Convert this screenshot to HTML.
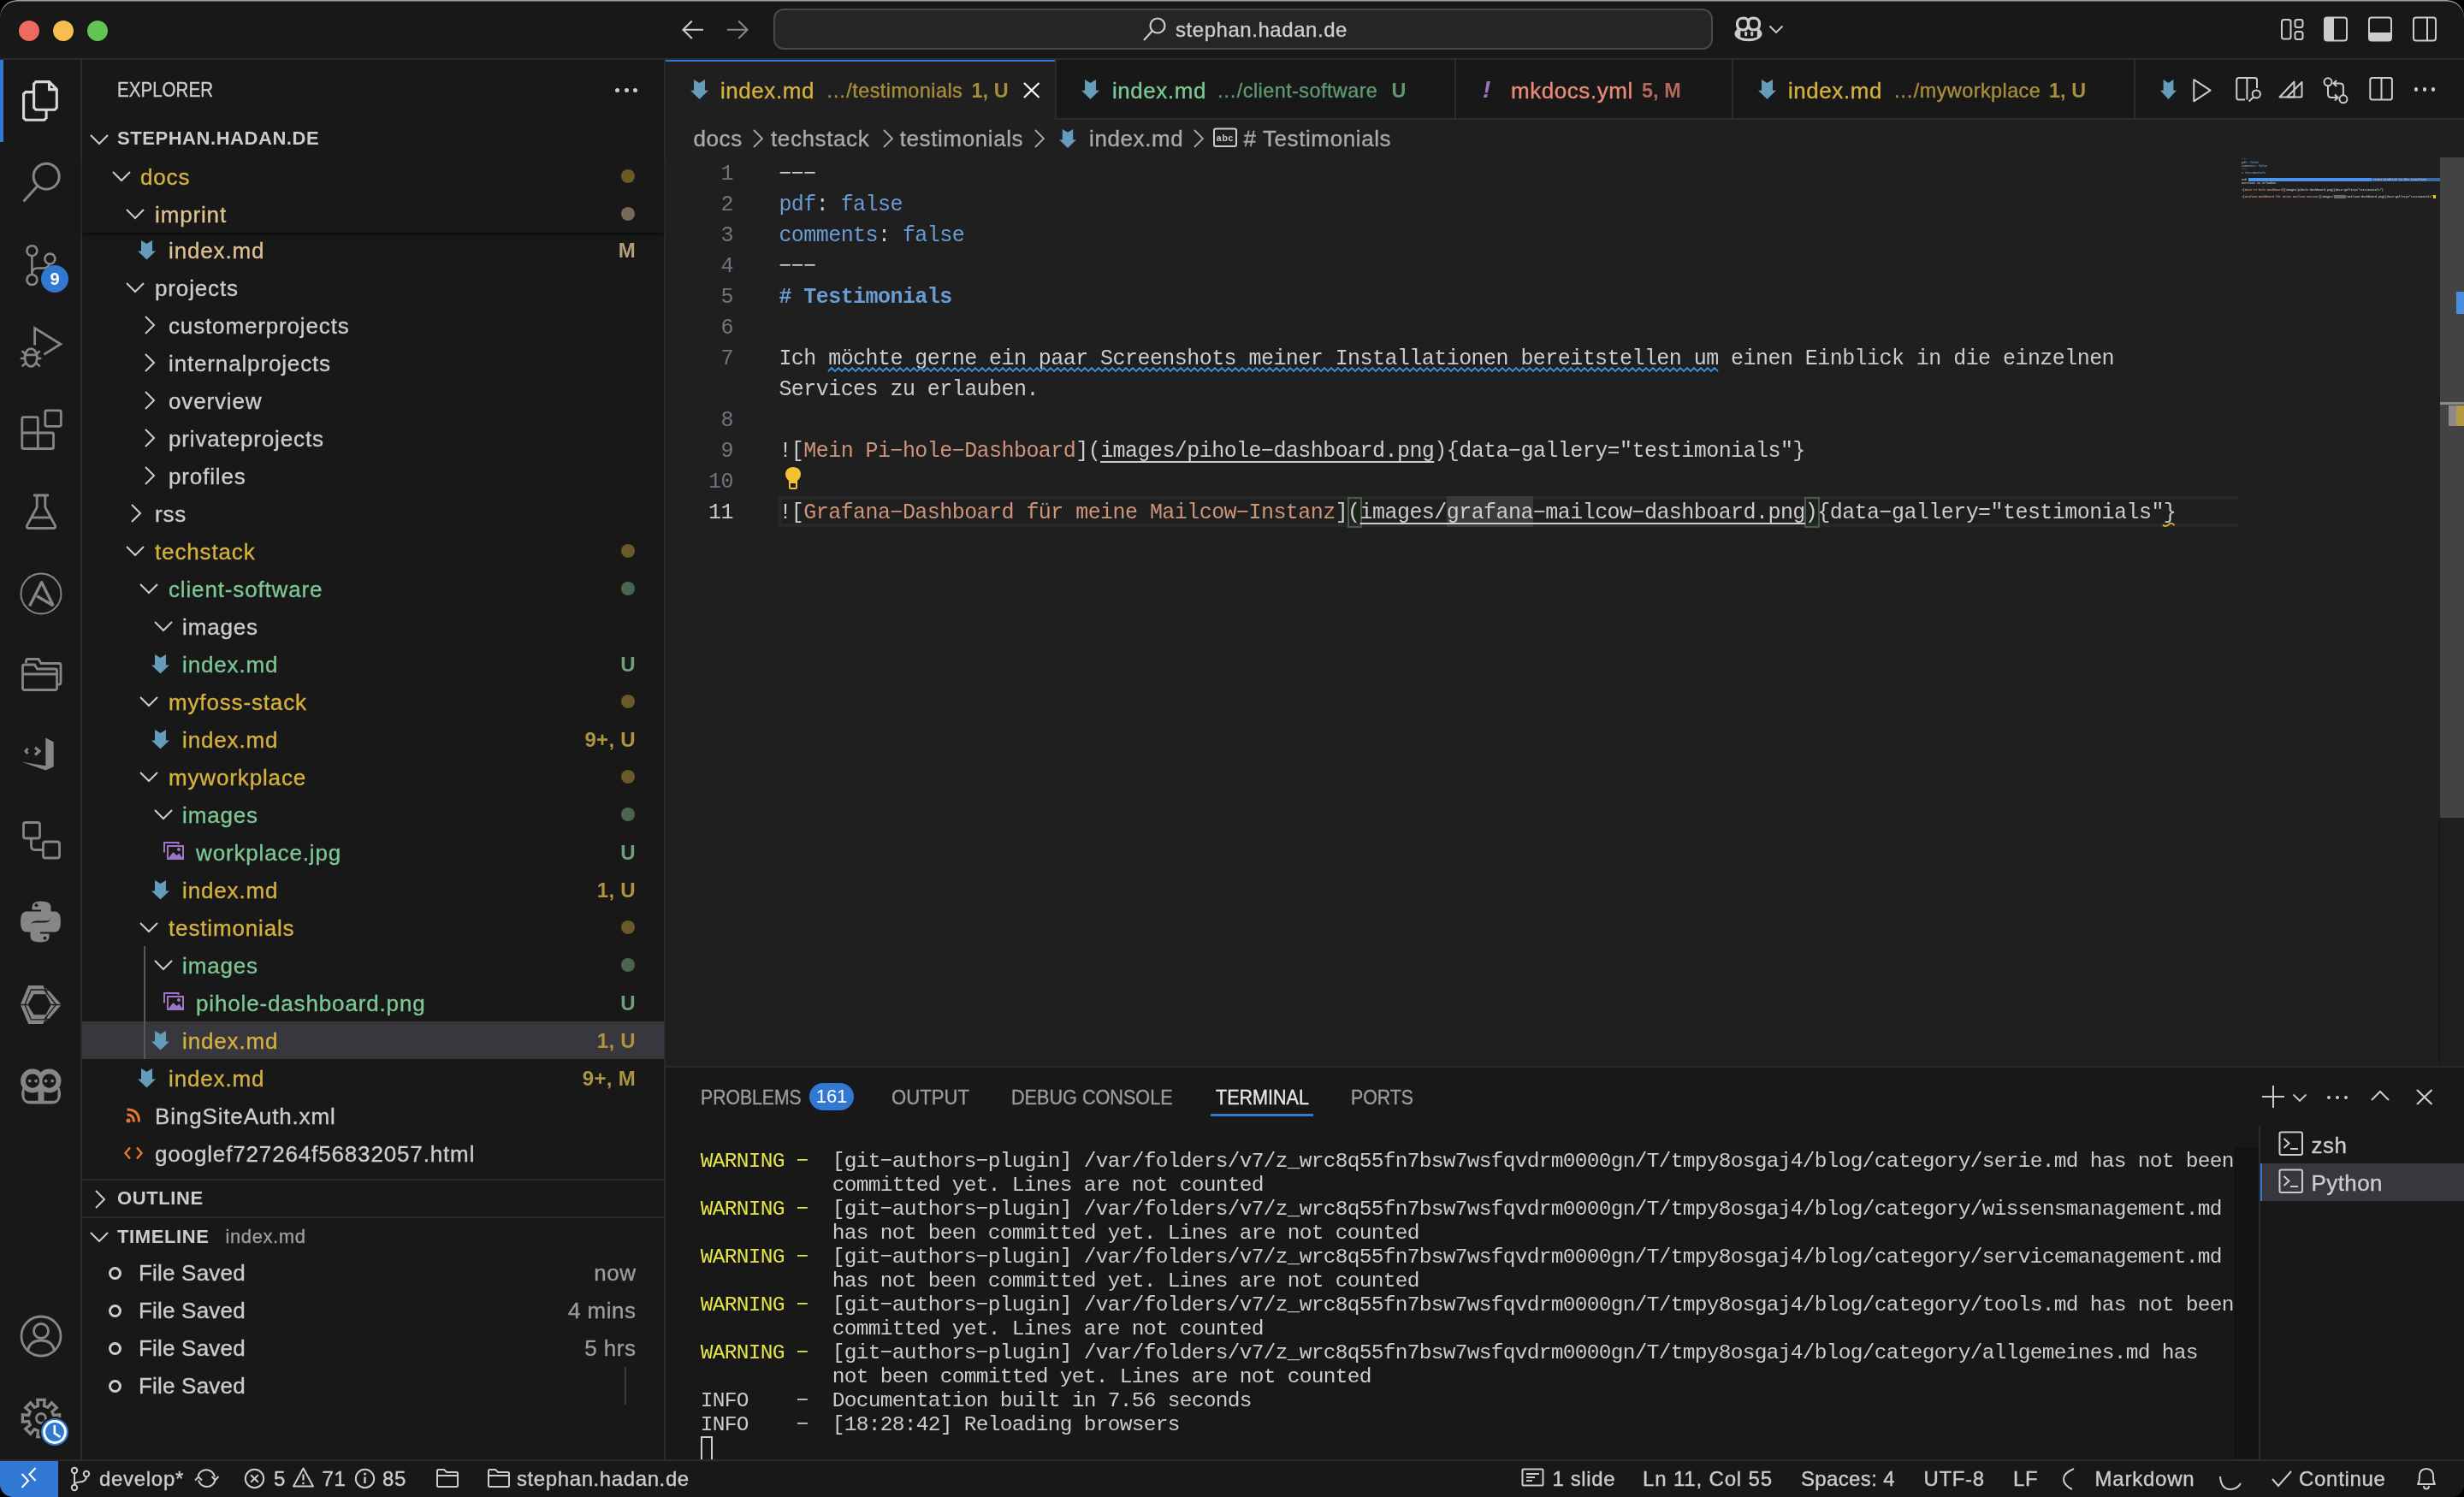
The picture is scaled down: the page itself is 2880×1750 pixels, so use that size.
<!DOCTYPE html>
<html><head><meta charset="utf-8"><title>VS Code</title>
<style>
html,body{margin:0;padding:0;background:#000;width:2880px;height:1750px;overflow:hidden}
.win{position:absolute;left:0;top:0;width:2880px;height:1750px;background:#181818;border-radius:20px 20px 15px 15px;overflow:hidden;will-change:transform}
.a{position:absolute}
.t{white-space:pre}
svg.a{overflow:visible}
</style></head><body><div class="win">

<div class="a" style="left:0px;top:68px;width:2880px;height:2px;background:#2b2b2b;"></div>
<div class="a" style="left:0;top:0;width:2880px;height:1750px;border-radius:20px 20px 15px 15px;box-shadow:inset 0 1.5px 0 0 #a0a0a0;pointer-events:none;z-index:50"></div>
<div class="a" style="left:22px;top:24px;width:24px;height:24px;border-radius:50%;background:#ee6a5f;box-shadow:0 0 0 1px rgba(0,0,0,0.25)"></div>
<div class="a" style="left:62px;top:24px;width:24px;height:24px;border-radius:50%;background:#f5be4f;box-shadow:0 0 0 1px rgba(0,0,0,0.25)"></div>
<div class="a" style="left:102px;top:24px;width:24px;height:24px;border-radius:50%;background:#61c454;box-shadow:0 0 0 1px rgba(0,0,0,0.25)"></div>
<svg class="a" style="left:796px;top:22px;" width="30" height="26" viewBox="0 0 30 26"><path d="M2.5 12.8 H26 M12.8 2.5 L2.5 12.8 L12.8 23" stroke="#cccccc" stroke-width="2.1" fill="none"/></svg>
<svg class="a" style="left:848px;top:22px;" width="30" height="26" viewBox="0 0 30 26"><path d="M2 12.8 H25.5 M15.2 2.5 L25.5 12.8 L15.2 23" stroke="#858585" stroke-width="2.1" fill="none"/></svg>
<div class="a" style="left:904px;top:10px;width:1094px;height:44px;border:2px solid #4a4a4a;border-radius:12px;background:#252525"></div>
<svg class="a" style="left:1334px;top:19px;" width="32" height="30" viewBox="0 0 32 30"><circle cx="19" cy="11" r="8.5" stroke="#cccccc" stroke-width="2.2" fill="none"/><path d="M13 17 L3 28" stroke="#cccccc" stroke-width="2.2"/></svg>
<div class="a t" style="left:1374px;top:22.68px;font-size:24px;line-height:24px;color:#cccccc;font-weight:400;font-family:'Liberation Sans', sans-serif;letter-spacing:0.55px;-webkit-text-stroke:0.35px currentColor;">stephan.hadan.de</div>
<svg class="a" style="left:2027px;top:19px;" width="34" height="30" viewBox="0 0 34 30">
<ellipse cx="16.5" cy="20.5" rx="16" ry="8.8" fill="#cccccc"/>
<path d="M7.3 14 H26.8 V24.5 Q17 27.5 7.3 24.5 Z" fill="#181818"/>

<path d="M11 2.2 C5.5 2.2 3.5 4.5 3.5 9.5 C3.5 14.5 6 16 10.5 16 C15 16 16.5 13.5 16.5 9 C16.5 4 15 2.2 11 2.2 Z" stroke="#cccccc" stroke-width="3.2" fill="#181818"/>
<path d="M22 2.2 C27.5 2.2 29.5 4.5 29.5 9.5 C29.5 14.5 27 16 22.5 16 C18 16 16.5 13.5 16.5 9 C16.5 4 18 2.2 22 2.2 Z" stroke="#cccccc" stroke-width="3.2" fill="#181818"/>
<rect x="12.2" y="17.8" width="3" height="5.4" rx="1.5" fill="#cccccc"/>
<rect x="19.2" y="17.8" width="3" height="5.4" rx="1.5" fill="#cccccc"/>
</svg>
<svg class="a" style="left:2067px;top:29px;" width="18" height="11" viewBox="0 0 18 11"><path d="M1.5 1.5 L9 9 L16.5 1.5" stroke="#cccccc" stroke-width="1.8" fill="none"/></svg>
<svg class="a" style="left:2664px;top:20px;" width="30" height="28" viewBox="0 0 30 28"><rect x="3" y="3" width="10.5" height="22.5" rx="2.5" stroke="#cccccc" stroke-width="2" fill="none"/><rect x="18.5" y="3" width="9" height="9" rx="2.5" stroke="#cccccc" stroke-width="2" fill="none"/><rect x="18.5" y="17" width="9" height="9" rx="2.5" stroke="#cccccc" stroke-width="2" fill="none"/></svg>
<svg class="a" style="left:2715px;top:19px;" width="30" height="30" viewBox="0 0 30 30"><rect x="2" y="1.5" width="26" height="27" rx="3" stroke="#cccccc" stroke-width="2" fill="none"/><path d="M2 4.5 Q2 1.5 5 1.5 H13 V28.5 H5 Q2 28.5 2 25.5 Z" fill="#cccccc"/></svg>
<svg class="a" style="left:2767px;top:19px;" width="30" height="30" viewBox="0 0 30 30"><rect x="2" y="1.5" width="26" height="27" rx="3" stroke="#cccccc" stroke-width="2" fill="none"/><path d="M2 19 H28 V25.5 Q28 28.5 25 28.5 H5 Q2 28.5 2 25.5 Z" fill="#cccccc"/></svg>
<svg class="a" style="left:2819px;top:19px;" width="30" height="30" viewBox="0 0 30 30"><rect x="2" y="1.5" width="26" height="27" rx="3" stroke="#cccccc" stroke-width="2" fill="none"/><path d="M18 1.5 V28.5" stroke="#cccccc" stroke-width="2"/></svg>
<div class="a" style="left:94px;top:70px;width:2px;height:1636px;background:#2b2b2b;"></div>
<div class="a" style="left:0px;top:70px;width:4px;height:96px;background:#3178d2;"></div>
<svg class="a" style="left:24px;top:92px;" width="48" height="52" viewBox="0 0 48 52"><path d="M15.6 6 L18 3.6 H33.5 L42.3 12.4 V33.9 L39.9 36.3 H18 L15.6 33.9 Z" stroke="#d7d7d7" stroke-width="3.1" fill="none" stroke-linejoin="miter"/>
<path d="M33.5 3.6 V12.6 H42.3" stroke="#d7d7d7" stroke-width="3.1" fill="none"/>
<path d="M15.6 15.6 H6 L3.6 18 V45.9 L6 48.3 H27.7 L30.1 45.9 V36.3" stroke="#d7d7d7" stroke-width="3.1" fill="none" stroke-linejoin="miter"/></svg>
<svg class="a" style="left:24px;top:186px;" width="50" height="54" viewBox="0 0 50 54"><circle cx="30.2" cy="20.2" r="15" stroke="#868686" stroke-width="3" fill="none"/><path d="M19.8 31.6 L3.5 49.5" stroke="#868686" stroke-width="3" fill="none"/></svg>
<svg class="a" style="left:24px;top:280px;" width="50" height="56" viewBox="0 0 50 56"><circle cx="13.4" cy="13.2" r="6" stroke="#868686" stroke-width="2.6" fill="none"/>
<circle cx="13.4" cy="47" r="6" stroke="#868686" stroke-width="2.6" fill="none"/>
<circle cx="34.4" cy="22.6" r="6" stroke="#868686" stroke-width="2.6" fill="none"/>
<path d="M13.4 19.2 V41" stroke="#868686" stroke-width="2.6" fill="none"/>
<path d="M13.4 40 Q13.4 33.5 20 33.5 H27 Q33 33.5 33.5 28.5" stroke="#868686" stroke-width="2.6" fill="none"/></svg>
<div class="a" style="left:48px;top:310px;width:32px;height:32px;border-radius:50%;background:#3178d2;color:#fff;font:700 20px/32px 'Liberation Sans',sans-serif;text-align:center">9</div>
<svg class="a" style="left:20px;top:376px;" width="56" height="48" viewBox="0 0 56 48"><path d="M20.6 27.6 V7.6 L50.8 26.2 L31.4 38.4" stroke="#868686" stroke-width="2.8" fill="none" stroke-linejoin="miter"/>
<ellipse cx="16.2" cy="42" rx="7.2" ry="10.3" stroke="#868686" stroke-width="2.8" fill="none"/>
<path d="M9 38.9 H23.4 M3.8 43 H9 M23.4 43 H28.4 M5.7 34.2 L10 38 M26.7 34.2 L22.4 38 M5.7 52.4 L10 48.5 M26.7 52.4 L22.4 48.5" stroke="#868686" stroke-width="2.6" fill="none"/></svg>
<svg class="a" style="left:22px;top:476px;" width="52" height="52" viewBox="0 0 52 52"><path d="M3.8 13.5 Q3.8 11.7 5.6 11.7 H20.5 Q22.3 11.7 22.3 13.5 V48.5 H5.6 Q3.8 48.5 3.8 46.7 Z" stroke="#868686" stroke-width="2.8" fill="none"/>
<path d="M3.8 30 H38.7 Q40.5 30 40.5 31.8 V46.7 Q40.5 48.5 38.7 48.5 H22.3" stroke="#868686" stroke-width="2.8" fill="none"/>
<rect x="30.8" y="3.8" width="18.5" height="18.5" rx="2" stroke="#868686" stroke-width="2.8" fill="none"/></svg>
<svg class="a" style="left:28px;top:574px;" width="40" height="48" viewBox="0 0 40 48"><path d="M11 5 H29 M15.2 5 V19 L3.5 40.5 Q2.5 43.5 5.5 43.5 H34.5 Q37.5 43.5 36.5 40.5 L24.8 19 V5" stroke="#868686" stroke-width="2.8" fill="none" stroke-linejoin="round"/>
<path d="M8.5 31 H31.5" stroke="#868686" stroke-width="2.8"/></svg>
<svg class="a" style="left:22px;top:668px;" width="52" height="52" viewBox="0 0 52 52"><circle cx="26" cy="26" r="23.5" stroke="#868686" stroke-width="1.9" fill="none"/>
<path d="M12.6 40.5 L26.6 12.8 L40.3 40" stroke="#868686" stroke-width="3.4" fill="none" stroke-linejoin="round"/>
<path d="M21 28.8 L40.3 40" stroke="#868686" stroke-width="3.4" fill="none"/></svg>
<svg class="a" style="left:22px;top:766px;" width="52" height="44" viewBox="0 0 52 44"><path d="M8.5 9 V6.5 Q8.5 4.5 10.5 4.5 H23 L26 9.5 H47 Q49 9.5 49 11.5 V32 Q49 34 47 34 H45" stroke="#868686" stroke-width="2.8" fill="none"/>
<path d="M4.5 13 Q4.5 11 6.5 11 H18.5 L21.5 16 H42.5 Q44.5 16 44.5 18 V38.5 Q44.5 40.5 42.5 40.5 H6.5 Q4.5 40.5 4.5 38.5 Z" stroke="#868686" stroke-width="2.8" fill="#181818"/>
<path d="M4.5 22 H44.5" stroke="#868686" stroke-width="2.8"/></svg>
<svg class="a" style="left:22px;top:860px;" width="44" height="44" viewBox="0 0 44 44"><path d="M31.3 2.6 L40.7 7.3 V36.3 L31.3 40.6 L3.6 30.7 L31.3 35.3 Z" fill="#868686"/>
<path d="M10.5 15 L8 18 L10.5 21" stroke="#868686" stroke-width="2.8" fill="none"/>
<path d="M19 14 L24 18 L19 22.5" stroke="#868686" stroke-width="3.2" fill="none"/></svg>
<svg class="a" style="left:22px;top:956px;" width="52" height="52" viewBox="0 0 52 52"><rect x="5.5" y="5.5" width="19" height="18.5" rx="2.5" stroke="#868686" stroke-width="2.8" fill="none"/>
<rect x="28.5" y="28" width="19" height="19" rx="2.5" stroke="#868686" stroke-width="2.8" fill="none"/>
<path d="M14.5 24 V33 Q14.5 37.5 19 37.5 H28.5" stroke="#868686" stroke-width="2.8" fill="none"/></svg>
<svg class="a" style="left:23px;top:1052px;" width="50" height="52" viewBox="0 0 50 52"><path d="M14.5 8 Q14.5 1.5 24.5 1.5 Q36.5 1.5 36.5 8 V19 Q36.5 24.5 31 24.5 H19.5 Q13 24.5 13 31 V37.5 H8 Q1 37.5 1 25.5 Q1 13.5 8 13.5 H25 V11.5 H14.5 Z" fill="#868686"/>
<circle cx="19.5" cy="6.2" r="2" fill="#181818"/>
<path d="M34.5 43 Q34.5 49.5 24.5 49.5 Q12.5 49.5 12.5 43 V32 Q12.5 26.5 18 26.5 H29.5 Q36 26.5 36 20 V13.5 H41 Q48 13.5 48 25.5 Q48 37.5 41 37.5 H24 V39.5 H34.5 Z" fill="#868686"/>
<circle cx="29.5" cy="44.8" r="2" fill="#181818"/></svg>
<svg class="a" style="left:18px;top:1144px;" width="60" height="60" viewBox="0 0 60 60"><path d="M15.2 8 H34 L53.8 30.5 L34 53 H15.2 L5.8 30.5 Z M21.6 18.2 H35.5 L41.8 30.5 L35.5 42.2 H21.6 L14.4 30.5 Z" fill="#868686" fill-rule="evenodd"/>
<path d="M18.3 13 H33.5 L47.6 30.5 L33.5 47.8 H18.3 L11 30.5 Z" stroke="#181818" stroke-width="1.3" fill="none"/>
<path d="M5 30.5 H14.5 M41.5 30.5 H54.5 M33 8 L37.5 18 M33 53 L37.5 43 M36.5 13.5 L43.5 13.5 M36.5 47.5 L43.5 47.5 M33.8 8.2 L37.5 12.5 M33.8 52.8 L37.5 48.5" stroke="#181818" stroke-width="1.3" fill="none"/></svg>
<svg class="a" style="left:22px;top:1246px;" width="52" height="48" viewBox="0 0 52 48"><rect x="3.2" y="21" width="45.8" height="23.6" rx="10" fill="#868686"/>
<path d="M6.5 27 H23 V40.8 H12 Q6.5 40.8 6.5 35 Z" fill="#181818"/>
<path d="M29 27 H45.5 V35 Q45.5 40.8 40 40.8 H29 Z" fill="#181818"/>
<circle cx="16" cy="17.6" r="14" fill="#868686"/><circle cx="35.5" cy="17.6" r="14" fill="#868686"/>
<rect x="22.5" y="18" width="7" height="24" fill="#868686"/>
<circle cx="16" cy="17.6" r="8.1" fill="#181818"/><circle cx="35.5" cy="17.6" r="8.1" fill="#181818"/>
<circle cx="12.7" cy="17.6" r="1.9" fill="#868686"/><circle cx="20.1" cy="17.6" r="1.9" fill="#868686"/>
<circle cx="31.6" cy="17.6" r="1.9" fill="#868686"/><circle cx="39.2" cy="17.6" r="1.9" fill="#868686"/></svg>
<svg class="a" style="left:22px;top:1536px;" width="52" height="52" viewBox="0 0 52 52"><circle cx="26" cy="26" r="23" stroke="#868686" stroke-width="2.8" fill="none"/>
<circle cx="26" cy="20" r="8.5" stroke="#868686" stroke-width="2.8" fill="none"/>
<path d="M10.5 42.5 Q13 31 26 31 Q39 31 41.5 42.5" stroke="#868686" stroke-width="2.8" fill="none"/></svg>
<svg class="a" style="left:22px;top:1632px;" width="52" height="52" viewBox="0 0 52 52"><path d="M47.6 21.8 L47.6 30.2 L40.6 29.5 L38.8 33.8 L44.2 38.3 L38.3 44.2 L33.8 38.8 L29.5 40.6 L30.2 47.6 L21.8 47.6 L22.5 40.6 L18.2 38.8 L13.7 44.2 L7.8 38.3 L13.2 33.8 L11.4 29.5 L4.4 30.2 L4.4 21.8 L11.4 22.5 L13.2 18.2 L7.8 13.7 L13.7 7.8 L18.2 13.2 L22.5 11.4 L21.8 4.4 L30.2 4.4 L29.5 11.4 L33.8 13.2 L38.3 7.8 L44.2 13.7 L38.8 18.2 L40.6 22.5 Z" stroke="#868686" stroke-width="3.3" fill="none" stroke-linejoin="miter"/>
<circle cx="26" cy="26" r="5.5" stroke="#868686" stroke-width="2.8" fill="none"/></svg>
<div class="a" style="left:48px;top:1658px;width:32px;height:32px;border-radius:50%;background:#3178d2;box-shadow:0 0 0 2px #181818"></div>
<svg class="a" style="left:48px;top:1658px;" width="32" height="32" viewBox="0 0 32 32"><circle cx="16" cy="16" r="12.4" stroke="#fff" stroke-width="3" fill="none"/><path d="M15.8 8 V17.5 L22.5 21.8" stroke="#fff" stroke-width="2.6" fill="none"/></svg>
<div class="a" style="left:776px;top:70px;width:2px;height:1636px;background:#2b2b2b;"></div>
<div class="a t" style="left:137px;top:93.53px;font-size:23px;line-height:23px;color:#cccccc;font-weight:400;font-family:'Liberation Sans', sans-serif;letter-spacing:0px;transform:scaleX(0.894);transform-origin:0 0;-webkit-text-stroke:0.35px currentColor;">EXPLORER</div>
<div class="a" style="left:719.0px;top:102.5px;width:5px;height:5px;border-radius:50%;background:#cccccc"></div>
<div class="a" style="left:729.5px;top:102.5px;width:5px;height:5px;border-radius:50%;background:#cccccc"></div>
<div class="a" style="left:740.0px;top:102.5px;width:5px;height:5px;border-radius:50%;background:#cccccc"></div>
<svg class="a" style="left:103.5px;top:155.5px;" width="24" height="14" viewBox="0 0 24 14"><path d="M2 2 L12.0 12 L22 2" stroke="#cccccc" stroke-width="2" fill="none"/></svg>
<div class="a t" style="left:137px;top:151.37px;font-size:22px;line-height:22px;color:#cccccc;font-weight:700;font-family:'Liberation Sans', sans-serif;letter-spacing:0.55px;">STEPHAN.HADAN.DE</div>
<div class="a" style="left:96px;top:1194px;width:680px;height:44px;background:#37373d;"></div>
<div class="a" style="left:168px;top:1106px;width:2px;height:132px;background:#585858;"></div>
<svg class="a" style="left:161px;top:280.5px;" width="21" height="22.5" viewBox="0 0 21 22.5"><path d="M4 0 L10.5 4 L17 0 V12.7 H21 L10.5 23 L0 12.7 H4 Z" fill="#649cba" transform="scale(1.000,0.978)"/></svg>
<div class="a t" style="left:197px;top:279.79px;font-size:26px;line-height:26px;color:#dfc08f;font-weight:400;font-family:'Liberation Sans', sans-serif;letter-spacing:0.85px;-webkit-text-stroke:0.35px currentColor;">index.md</div>
<div class="a t" style="right:2137px;top:281.48px;font-size:24px;line-height:24px;color:#b59e7a;font-weight:700;font-family:'Liberation Sans', sans-serif;letter-spacing:0.3px;">M</div>
<svg class="a" style="left:146.0px;top:329.0px;" width="24" height="14" viewBox="0 0 24 14"><path d="M2 2 L12.0 12 L22 2" stroke="#cccccc" stroke-width="2" fill="none"/></svg>
<div class="a t" style="left:181px;top:323.79px;font-size:26px;line-height:26px;color:#cccccc;font-weight:400;font-family:'Liberation Sans', sans-serif;letter-spacing:0.85px;-webkit-text-stroke:0.35px currentColor;">projects</div>
<svg class="a" style="left:168.0px;top:368.0px;" width="14" height="24" viewBox="0 0 14 24"><path d="M2 2 L12 12.0 L2 22" stroke="#cccccc" stroke-width="2" fill="none"/></svg>
<div class="a t" style="left:197px;top:367.79px;font-size:26px;line-height:26px;color:#cccccc;font-weight:400;font-family:'Liberation Sans', sans-serif;letter-spacing:0.85px;-webkit-text-stroke:0.35px currentColor;">customerprojects</div>
<svg class="a" style="left:168.0px;top:412.0px;" width="14" height="24" viewBox="0 0 14 24"><path d="M2 2 L12 12.0 L2 22" stroke="#cccccc" stroke-width="2" fill="none"/></svg>
<div class="a t" style="left:197px;top:411.79px;font-size:26px;line-height:26px;color:#cccccc;font-weight:400;font-family:'Liberation Sans', sans-serif;letter-spacing:0.85px;-webkit-text-stroke:0.35px currentColor;">internalprojects</div>
<svg class="a" style="left:168.0px;top:456.0px;" width="14" height="24" viewBox="0 0 14 24"><path d="M2 2 L12 12.0 L2 22" stroke="#cccccc" stroke-width="2" fill="none"/></svg>
<div class="a t" style="left:197px;top:455.79px;font-size:26px;line-height:26px;color:#cccccc;font-weight:400;font-family:'Liberation Sans', sans-serif;letter-spacing:0.85px;-webkit-text-stroke:0.35px currentColor;">overview</div>
<svg class="a" style="left:168.0px;top:500.0px;" width="14" height="24" viewBox="0 0 14 24"><path d="M2 2 L12 12.0 L2 22" stroke="#cccccc" stroke-width="2" fill="none"/></svg>
<div class="a t" style="left:197px;top:499.79px;font-size:26px;line-height:26px;color:#cccccc;font-weight:400;font-family:'Liberation Sans', sans-serif;letter-spacing:0.85px;-webkit-text-stroke:0.35px currentColor;">privateprojects</div>
<svg class="a" style="left:168.0px;top:544.0px;" width="14" height="24" viewBox="0 0 14 24"><path d="M2 2 L12 12.0 L2 22" stroke="#cccccc" stroke-width="2" fill="none"/></svg>
<div class="a t" style="left:197px;top:543.79px;font-size:26px;line-height:26px;color:#cccccc;font-weight:400;font-family:'Liberation Sans', sans-serif;letter-spacing:0.85px;-webkit-text-stroke:0.35px currentColor;">profiles</div>
<svg class="a" style="left:152.0px;top:588.0px;" width="14" height="24" viewBox="0 0 14 24"><path d="M2 2 L12 12.0 L2 22" stroke="#cccccc" stroke-width="2" fill="none"/></svg>
<div class="a t" style="left:181px;top:587.79px;font-size:26px;line-height:26px;color:#cccccc;font-weight:400;font-family:'Liberation Sans', sans-serif;letter-spacing:0.85px;-webkit-text-stroke:0.35px currentColor;">rss</div>
<svg class="a" style="left:146.0px;top:637.0px;" width="24" height="14" viewBox="0 0 24 14"><path d="M2 2 L12.0 12 L22 2" stroke="#cccccc" stroke-width="2" fill="none"/></svg>
<div class="a t" style="left:181px;top:631.79px;font-size:26px;line-height:26px;color:#d4b13d;font-weight:400;font-family:'Liberation Sans', sans-serif;letter-spacing:0.85px;-webkit-text-stroke:0.35px currentColor;">techstack</div>
<div class="a" style="left:726px;top:636px;width:16px;height:16px;border-radius:50%;background:#6a5a28"></div>
<svg class="a" style="left:162.0px;top:681.0px;" width="24" height="14" viewBox="0 0 24 14"><path d="M2 2 L12.0 12 L22 2" stroke="#cccccc" stroke-width="2" fill="none"/></svg>
<div class="a t" style="left:197px;top:675.79px;font-size:26px;line-height:26px;color:#7cc794;font-weight:400;font-family:'Liberation Sans', sans-serif;letter-spacing:0.85px;-webkit-text-stroke:0.35px currentColor;">client-software</div>
<div class="a" style="left:726px;top:680px;width:16px;height:16px;border-radius:50%;background:#4b6450"></div>
<svg class="a" style="left:178.5px;top:725.0px;" width="24" height="14" viewBox="0 0 24 14"><path d="M2 2 L12.0 12 L22 2" stroke="#cccccc" stroke-width="2" fill="none"/></svg>
<div class="a t" style="left:213px;top:719.79px;font-size:26px;line-height:26px;color:#cccccc;font-weight:400;font-family:'Liberation Sans', sans-serif;letter-spacing:0.85px;-webkit-text-stroke:0.35px currentColor;">images</div>
<svg class="a" style="left:177px;top:764.5px;" width="21" height="22.5" viewBox="0 0 21 22.5"><path d="M4 0 L10.5 4 L17 0 V12.7 H21 L10.5 23 L0 12.7 H4 Z" fill="#649cba" transform="scale(1.000,0.978)"/></svg>
<div class="a t" style="left:213px;top:763.79px;font-size:26px;line-height:26px;color:#7cc794;font-weight:400;font-family:'Liberation Sans', sans-serif;letter-spacing:0.85px;-webkit-text-stroke:0.35px currentColor;">index.md</div>
<div class="a t" style="right:2137px;top:765.48px;font-size:24px;line-height:24px;color:#6ea07d;font-weight:700;font-family:'Liberation Sans', sans-serif;letter-spacing:0.3px;">U</div>
<svg class="a" style="left:162.0px;top:813.0px;" width="24" height="14" viewBox="0 0 24 14"><path d="M2 2 L12.0 12 L22 2" stroke="#cccccc" stroke-width="2" fill="none"/></svg>
<div class="a t" style="left:197px;top:807.79px;font-size:26px;line-height:26px;color:#d4b13d;font-weight:400;font-family:'Liberation Sans', sans-serif;letter-spacing:0.85px;-webkit-text-stroke:0.35px currentColor;">myfoss-stack</div>
<div class="a" style="left:726px;top:812px;width:16px;height:16px;border-radius:50%;background:#6a5a28"></div>
<svg class="a" style="left:177px;top:852.5px;" width="21" height="22.5" viewBox="0 0 21 22.5"><path d="M4 0 L10.5 4 L17 0 V12.7 H21 L10.5 23 L0 12.7 H4 Z" fill="#649cba" transform="scale(1.000,0.978)"/></svg>
<div class="a t" style="left:213px;top:851.79px;font-size:26px;line-height:26px;color:#d4b13d;font-weight:400;font-family:'Liberation Sans', sans-serif;letter-spacing:0.85px;-webkit-text-stroke:0.35px currentColor;">index.md</div>
<div class="a t" style="right:2137px;top:853.48px;font-size:24px;line-height:24px;color:#ad953e;font-weight:700;font-family:'Liberation Sans', sans-serif;letter-spacing:0.3px;">9+, U</div>
<svg class="a" style="left:162.0px;top:901.0px;" width="24" height="14" viewBox="0 0 24 14"><path d="M2 2 L12.0 12 L22 2" stroke="#cccccc" stroke-width="2" fill="none"/></svg>
<div class="a t" style="left:197px;top:895.79px;font-size:26px;line-height:26px;color:#d4b13d;font-weight:400;font-family:'Liberation Sans', sans-serif;letter-spacing:0.85px;-webkit-text-stroke:0.35px currentColor;">myworkplace</div>
<div class="a" style="left:726px;top:900px;width:16px;height:16px;border-radius:50%;background:#6a5a28"></div>
<svg class="a" style="left:178.5px;top:945.0px;" width="24" height="14" viewBox="0 0 24 14"><path d="M2 2 L12.0 12 L22 2" stroke="#cccccc" stroke-width="2" fill="none"/></svg>
<div class="a t" style="left:213px;top:939.79px;font-size:26px;line-height:26px;color:#7cc794;font-weight:400;font-family:'Liberation Sans', sans-serif;letter-spacing:0.85px;-webkit-text-stroke:0.35px currentColor;">images</div>
<div class="a" style="left:726px;top:944px;width:16px;height:16px;border-radius:50%;background:#4b6450"></div>
<svg class="a" style="left:191px;top:984px;" width="24" height="21" viewBox="0 0 24 21"><path d="M1 12.5 V1 H17.5 V3" stroke="#a074c4" stroke-width="2" fill="none"/><rect x="5" y="5" width="18" height="15" stroke="#a074c4" stroke-width="2" fill="none"/><path d="M5.5 19.5 L11.5 12 L15.5 16 L18.5 13.5 L22.5 19.5 Z" fill="#a074c4"/><circle cx="18" cy="9" r="2" fill="#a074c4"/></svg>
<div class="a t" style="left:229px;top:983.79px;font-size:26px;line-height:26px;color:#7cc794;font-weight:400;font-family:'Liberation Sans', sans-serif;letter-spacing:0.85px;-webkit-text-stroke:0.35px currentColor;">workplace.jpg</div>
<div class="a t" style="right:2137px;top:985.48px;font-size:24px;line-height:24px;color:#6ea07d;font-weight:700;font-family:'Liberation Sans', sans-serif;letter-spacing:0.3px;">U</div>
<svg class="a" style="left:177px;top:1028.5px;" width="21" height="22.5" viewBox="0 0 21 22.5"><path d="M4 0 L10.5 4 L17 0 V12.7 H21 L10.5 23 L0 12.7 H4 Z" fill="#649cba" transform="scale(1.000,0.978)"/></svg>
<div class="a t" style="left:213px;top:1027.79px;font-size:26px;line-height:26px;color:#d4b13d;font-weight:400;font-family:'Liberation Sans', sans-serif;letter-spacing:0.85px;-webkit-text-stroke:0.35px currentColor;">index.md</div>
<div class="a t" style="right:2137px;top:1029.48px;font-size:24px;line-height:24px;color:#ad953e;font-weight:700;font-family:'Liberation Sans', sans-serif;letter-spacing:0.3px;">1, U</div>
<svg class="a" style="left:162.0px;top:1077.0px;" width="24" height="14" viewBox="0 0 24 14"><path d="M2 2 L12.0 12 L22 2" stroke="#cccccc" stroke-width="2" fill="none"/></svg>
<div class="a t" style="left:197px;top:1071.79px;font-size:26px;line-height:26px;color:#d4b13d;font-weight:400;font-family:'Liberation Sans', sans-serif;letter-spacing:0.85px;-webkit-text-stroke:0.35px currentColor;">testimonials</div>
<div class="a" style="left:726px;top:1076px;width:16px;height:16px;border-radius:50%;background:#6a5a28"></div>
<svg class="a" style="left:178.5px;top:1121.0px;" width="24" height="14" viewBox="0 0 24 14"><path d="M2 2 L12.0 12 L22 2" stroke="#cccccc" stroke-width="2" fill="none"/></svg>
<div class="a t" style="left:213px;top:1115.79px;font-size:26px;line-height:26px;color:#7cc794;font-weight:400;font-family:'Liberation Sans', sans-serif;letter-spacing:0.85px;-webkit-text-stroke:0.35px currentColor;">images</div>
<div class="a" style="left:726px;top:1120px;width:16px;height:16px;border-radius:50%;background:#4b6450"></div>
<svg class="a" style="left:191px;top:1160px;" width="24" height="21" viewBox="0 0 24 21"><path d="M1 12.5 V1 H17.5 V3" stroke="#a074c4" stroke-width="2" fill="none"/><rect x="5" y="5" width="18" height="15" stroke="#a074c4" stroke-width="2" fill="none"/><path d="M5.5 19.5 L11.5 12 L15.5 16 L18.5 13.5 L22.5 19.5 Z" fill="#a074c4"/><circle cx="18" cy="9" r="2" fill="#a074c4"/></svg>
<div class="a t" style="left:229px;top:1159.79px;font-size:26px;line-height:26px;color:#7cc794;font-weight:400;font-family:'Liberation Sans', sans-serif;letter-spacing:0.85px;-webkit-text-stroke:0.35px currentColor;">pihole-dashboard.png</div>
<div class="a t" style="right:2137px;top:1161.48px;font-size:24px;line-height:24px;color:#6ea07d;font-weight:700;font-family:'Liberation Sans', sans-serif;letter-spacing:0.3px;">U</div>
<svg class="a" style="left:177px;top:1204.5px;" width="21" height="22.5" viewBox="0 0 21 22.5"><path d="M4 0 L10.5 4 L17 0 V12.7 H21 L10.5 23 L0 12.7 H4 Z" fill="#649cba" transform="scale(1.000,0.978)"/></svg>
<div class="a t" style="left:213px;top:1203.79px;font-size:26px;line-height:26px;color:#d4b13d;font-weight:400;font-family:'Liberation Sans', sans-serif;letter-spacing:0.85px;-webkit-text-stroke:0.35px currentColor;">index.md</div>
<div class="a t" style="right:2137px;top:1205.48px;font-size:24px;line-height:24px;color:#ad953e;font-weight:700;font-family:'Liberation Sans', sans-serif;letter-spacing:0.3px;">1, U</div>
<svg class="a" style="left:161px;top:1248.5px;" width="21" height="22.5" viewBox="0 0 21 22.5"><path d="M4 0 L10.5 4 L17 0 V12.7 H21 L10.5 23 L0 12.7 H4 Z" fill="#649cba" transform="scale(1.000,0.978)"/></svg>
<div class="a t" style="left:197px;top:1247.79px;font-size:26px;line-height:26px;color:#d4b13d;font-weight:400;font-family:'Liberation Sans', sans-serif;letter-spacing:0.85px;-webkit-text-stroke:0.35px currentColor;">index.md</div>
<div class="a t" style="right:2137px;top:1249.48px;font-size:24px;line-height:24px;color:#ad953e;font-weight:700;font-family:'Liberation Sans', sans-serif;letter-spacing:0.3px;">9+, M</div>
<svg class="a" style="left:147px;top:1295px;" width="18" height="18" viewBox="0 0 18 18"><circle cx="3" cy="15" r="2.5" fill="#e37933"/><path d="M1.5 8 Q9.5 8 9.5 16.5" stroke="#e37933" stroke-width="3" fill="none"/><path d="M1.5 2 Q15.5 2 15.5 16.5" stroke="#e37933" stroke-width="3" fill="none"/></svg>
<div class="a t" style="left:181px;top:1291.79px;font-size:26px;line-height:26px;color:#cccccc;font-weight:400;font-family:'Liberation Sans', sans-serif;letter-spacing:0.85px;-webkit-text-stroke:0.35px currentColor;">BingSiteAuth.xml</div>
<svg class="a" style="left:145px;top:1340px;" width="22" height="16" viewBox="0 0 22 16"><path d="M7 1.5 L1.5 8 L7 14.5 M15 1.5 L20.5 8 L15 14.5" stroke="#e37933" stroke-width="2.4" fill="none"/></svg>
<div class="a t" style="left:181px;top:1335.79px;font-size:26px;line-height:26px;color:#cccccc;font-weight:400;font-family:'Liberation Sans', sans-serif;letter-spacing:0.85px;-webkit-text-stroke:0.35px currentColor;">googlef727264f56832057.html</div>
<div class="a" style="left:96px;top:184px;width:680px;height:88px;background:#181818;box-shadow:0 3px 4px -1px rgba(0,0,0,0.6)"></div>
<svg class="a" style="left:129.5px;top:199.0px;" width="24" height="14" viewBox="0 0 24 14"><path d="M2 2 L12.0 12 L22 2" stroke="#cccccc" stroke-width="2" fill="none"/></svg>
<div class="a t" style="left:164px;top:193.79px;font-size:26px;line-height:26px;color:#d4b13d;font-weight:400;font-family:'Liberation Sans', sans-serif;letter-spacing:0.85px;-webkit-text-stroke:0.35px currentColor;">docs</div>
<div class="a" style="left:726px;top:198px;width:16px;height:16px;border-radius:50%;background:#6a5a28"></div>
<svg class="a" style="left:146.0px;top:243.0px;" width="24" height="14" viewBox="0 0 24 14"><path d="M2 2 L12.0 12 L22 2" stroke="#cccccc" stroke-width="2" fill="none"/></svg>
<div class="a t" style="left:181px;top:237.79px;font-size:26px;line-height:26px;color:#dfc08f;font-weight:400;font-family:'Liberation Sans', sans-serif;letter-spacing:0.85px;-webkit-text-stroke:0.35px currentColor;">imprint</div>
<div class="a" style="left:726px;top:242px;width:16px;height:16px;border-radius:50%;background:#766957"></div>
<div class="a" style="left:96px;top:1378px;width:680px;height:2px;background:#2b2b2b;"></div>
<svg class="a" style="left:110.0px;top:1389.5px;" width="14" height="24" viewBox="0 0 14 24"><path d="M2 2 L12 12.0 L2 22" stroke="#cccccc" stroke-width="2" fill="none"/></svg>
<div class="a t" style="left:137px;top:1390.37px;font-size:22px;line-height:22px;color:#cccccc;font-weight:700;font-family:'Liberation Sans', sans-serif;letter-spacing:0.6px;">OUTLINE</div>
<div class="a" style="left:96px;top:1422px;width:680px;height:2px;background:#2b2b2b;"></div>
<svg class="a" style="left:103.5px;top:1438.5px;" width="24" height="14" viewBox="0 0 24 14"><path d="M2 2 L12.0 12 L22 2" stroke="#cccccc" stroke-width="2" fill="none"/></svg>
<div class="a t" style="left:137px;top:1434.87px;font-size:22px;line-height:22px;color:#cccccc;font-weight:700;font-family:'Liberation Sans', sans-serif;letter-spacing:0.6px;">TIMELINE</div>
<div class="a t" style="left:263.5px;top:1434.87px;font-size:22px;line-height:22px;color:#9d9d9d;font-weight:400;font-family:'Liberation Sans', sans-serif;letter-spacing:0.6px;-webkit-text-stroke:0.35px currentColor;">index.md</div>
<div class="a" style="left:127px;top:1480.5px;width:9px;height:9px;border:3px solid #cccccc;border-radius:50%"></div>
<div class="a t" style="left:162px;top:1475.49px;font-size:26px;line-height:26px;color:#cccccc;font-weight:400;font-family:'Liberation Sans', sans-serif;letter-spacing:0.2px;-webkit-text-stroke:0.35px currentColor;">File Saved</div>
<div class="a t" style="right:2136.5px;top:1475.49px;font-size:26px;line-height:26px;color:#9d9d9d;font-weight:400;font-family:'Liberation Sans', sans-serif;letter-spacing:0.5px;-webkit-text-stroke:0.35px currentColor;">now</div>
<div class="a" style="left:127px;top:1524.5px;width:9px;height:9px;border:3px solid #cccccc;border-radius:50%"></div>
<div class="a t" style="left:162px;top:1519.49px;font-size:26px;line-height:26px;color:#cccccc;font-weight:400;font-family:'Liberation Sans', sans-serif;letter-spacing:0.2px;-webkit-text-stroke:0.35px currentColor;">File Saved</div>
<div class="a t" style="right:2136.5px;top:1519.49px;font-size:26px;line-height:26px;color:#9d9d9d;font-weight:400;font-family:'Liberation Sans', sans-serif;letter-spacing:0.5px;-webkit-text-stroke:0.35px currentColor;">4 mins</div>
<div class="a" style="left:127px;top:1568.5px;width:9px;height:9px;border:3px solid #cccccc;border-radius:50%"></div>
<div class="a t" style="left:162px;top:1563.49px;font-size:26px;line-height:26px;color:#cccccc;font-weight:400;font-family:'Liberation Sans', sans-serif;letter-spacing:0.2px;-webkit-text-stroke:0.35px currentColor;">File Saved</div>
<div class="a t" style="right:2136.5px;top:1563.49px;font-size:26px;line-height:26px;color:#9d9d9d;font-weight:400;font-family:'Liberation Sans', sans-serif;letter-spacing:0.5px;-webkit-text-stroke:0.35px currentColor;">5 hrs</div>
<div class="a" style="left:127px;top:1612.5px;width:9px;height:9px;border:3px solid #cccccc;border-radius:50%"></div>
<div class="a t" style="left:162px;top:1607.49px;font-size:26px;line-height:26px;color:#cccccc;font-weight:400;font-family:'Liberation Sans', sans-serif;letter-spacing:0.2px;-webkit-text-stroke:0.35px currentColor;">File Saved</div>
<div class="a" style="left:730px;top:1598px;width:2px;height:44px;background:#3a3a3a;"></div>
<div class="a" style="left:778px;top:138px;width:2102px;height:2px;background:#2b2b2b;"></div>
<div class="a" style="left:778px;top:70px;width:455px;height:70px;background:#1f1f1f;"></div>
<div class="a" style="left:778px;top:70px;width:455px;height:2px;background:#3178d2;"></div>
<div class="a" style="left:1233px;top:70px;width:2px;height:70px;background:#2b2b2b;"></div>
<svg class="a" style="left:806.5px;top:92.5px;" width="21" height="23" viewBox="0 0 21 23"><path d="M4 0 L10.5 4 L17 0 V12.7 H21 L10.5 23 L0 12.7 H4 Z" fill="#649cba" transform="scale(1.000,1.000)"/></svg>
<div class="a t" style="left:842px;top:92.69px;font-size:26px;line-height:26px;color:#d4b13d;font-weight:400;font-family:'Liberation Sans', sans-serif;letter-spacing:0.55px;-webkit-text-stroke:0.35px currentColor;">index.md</div>
<div class="a t" style="left:965.5px;top:94.89px;font-size:23.4px;line-height:23.4px;color:#a88f3b;font-weight:400;font-family:'Liberation Sans', sans-serif;letter-spacing:0.45px;-webkit-text-stroke:0.35px currentColor;">…/testimonials</div>
<div class="a t" style="left:1135.4px;top:94.89px;font-size:23.4px;line-height:23.4px;color:#a88f3b;font-weight:700;font-family:'Liberation Sans', sans-serif;letter-spacing:0.1px;">1, U</div>
<svg class="a" style="left:1195px;top:95px;" width="22" height="21" viewBox="0 0 22 21"><path d="M2 2 L19.5 19 M19.5 2 L2 19" stroke="#ffffff" stroke-width="2.2"/></svg>
<div class="a" style="left:1700px;top:70px;width:2px;height:70px;background:#2b2b2b;"></div>
<svg class="a" style="left:1264px;top:92.5px;" width="21" height="23" viewBox="0 0 21 23"><path d="M4 0 L10.5 4 L17 0 V12.7 H21 L10.5 23 L0 12.7 H4 Z" fill="#649cba" transform="scale(1.000,1.000)"/></svg>
<div class="a t" style="left:1300px;top:92.69px;font-size:26px;line-height:26px;color:#7cc794;font-weight:400;font-family:'Liberation Sans', sans-serif;letter-spacing:0.55px;-webkit-text-stroke:0.35px currentColor;">index.md</div>
<div class="a t" style="left:1422px;top:94.89px;font-size:23.4px;line-height:23.4px;color:#5f9a72;font-weight:400;font-family:'Liberation Sans', sans-serif;letter-spacing:0.45px;-webkit-text-stroke:0.35px currentColor;">…/client-software</div>
<div class="a t" style="left:1626.5px;top:94.89px;font-size:23.4px;line-height:23.4px;color:#5f9a72;font-weight:700;font-family:'Liberation Sans', sans-serif;letter-spacing:0px;">U</div>
<div class="a" style="left:2024px;top:70px;width:2px;height:70px;background:#2b2b2b;"></div>
<div class="a t" style="left:1733px;top:90.99px;font-size:28px;line-height:28px;color:#a074c4;font-weight:700;font-family:'Liberation Sans', sans-serif;letter-spacing:0px;font-style:italic">!</div>
<div class="a t" style="left:1766px;top:92.69px;font-size:26px;line-height:26px;color:#ea8a78;font-weight:400;font-family:'Liberation Sans', sans-serif;letter-spacing:0.55px;-webkit-text-stroke:0.35px currentColor;">mkdocs.yml</div>
<div class="a t" style="left:1919px;top:94.89px;font-size:23.4px;line-height:23.4px;color:#b26a5e;font-weight:700;font-family:'Liberation Sans', sans-serif;letter-spacing:0.1px;">5, M</div>
<div class="a" style="left:2494px;top:70px;width:2px;height:70px;background:#2b2b2b;"></div>
<svg class="a" style="left:2055px;top:92.5px;" width="21" height="23" viewBox="0 0 21 23"><path d="M4 0 L10.5 4 L17 0 V12.7 H21 L10.5 23 L0 12.7 H4 Z" fill="#649cba" transform="scale(1.000,1.000)"/></svg>
<div class="a t" style="left:2090px;top:92.69px;font-size:26px;line-height:26px;color:#d4b13d;font-weight:400;font-family:'Liberation Sans', sans-serif;letter-spacing:0.55px;-webkit-text-stroke:0.35px currentColor;">index.md</div>
<div class="a t" style="left:2213px;top:94.89px;font-size:23.4px;line-height:23.4px;color:#a88f3b;font-weight:400;font-family:'Liberation Sans', sans-serif;letter-spacing:0.45px;-webkit-text-stroke:0.35px currentColor;">…/myworkplace</div>
<div class="a t" style="left:2395px;top:94.89px;font-size:23.4px;line-height:23.4px;color:#a88f3b;font-weight:700;font-family:'Liberation Sans', sans-serif;letter-spacing:0.1px;">1, U</div>
<svg class="a" style="left:2525px;top:93px;" width="19" height="23" viewBox="0 0 19 23"><path d="M4 0 L10.5 4 L17 0 V12.7 H21 L10.5 23 L0 12.7 H4 Z" fill="#649cba" transform="scale(0.905,1.000)"/></svg>
<svg class="a" style="left:2562px;top:91px;" width="24" height="30" viewBox="0 0 24 30"><path d="M2.3 2.2 L21.6 14.6 L2.3 27.3 Z" stroke="#cccccc" stroke-width="2" fill="none" stroke-linejoin="round"/></svg>
<svg class="a" style="left:2612px;top:89px;" width="34" height="32" viewBox="0 0 34 32"><path d="M26 14 V4.5 Q26 2 23.5 2 H4.8 Q2.3 2 2.3 4.5 V25 Q2.3 27.5 4.8 27.5 H12" stroke="#cccccc" stroke-width="2" fill="none"/><path d="M14.4 2 V27.5" stroke="#cccccc" stroke-width="2"/><circle cx="25.3" cy="21" r="4.6" stroke="#cccccc" stroke-width="2" fill="none"/><path d="M22 24.5 L16.6 29.5" stroke="#cccccc" stroke-width="2"/></svg>
<svg class="a" style="left:2662px;top:93px;" width="32" height="24" viewBox="0 0 32 24"><path d="M2.5 20.5 L19.5 2.5 V20.5 Z" stroke="#cccccc" stroke-width="2" fill="none" stroke-linejoin="round"/><path d="M11 20.5 L28.5 3 V19.5 Q28.5 20.5 27.5 20.5 H11" stroke="#cccccc" stroke-width="2" fill="none" stroke-linejoin="round"/></svg>
<svg class="a" style="left:2714px;top:89px;" width="32" height="34" viewBox="0 0 32 34"><circle cx="7" cy="6.8" r="4.5" stroke="#cccccc" stroke-width="2" fill="none"/><circle cx="24.9" cy="26.8" r="4.5" stroke="#cccccc" stroke-width="2" fill="none"/><path d="M7 11.3 V21 Q7 25 11 25 H18 M15 21.5 L18.5 25 L15 28.5" stroke="#cccccc" stroke-width="2" fill="none"/><path d="M24.9 22.3 V12.5 Q24.9 8.5 20.9 8.5 H14 M17 5 L13.5 8.5 L17 12" stroke="#cccccc" stroke-width="2" fill="none"/></svg>
<svg class="a" style="left:2768px;top:89px;" width="30" height="30" viewBox="0 0 30 30"><rect x="2.3" y="2" width="25.6" height="25.5" rx="2.5" stroke="#cccccc" stroke-width="2" fill="none"/><path d="M15.5 2 V27.5" stroke="#cccccc" stroke-width="2"/></svg>
<div class="a" style="left:2821.6px;top:102.4px;width:4.8px;height:4.8px;border-radius:50%;background:#cccccc"></div>
<div class="a" style="left:2831.6px;top:102.4px;width:4.8px;height:4.8px;border-radius:50%;background:#cccccc"></div>
<div class="a" style="left:2841.6px;top:102.4px;width:4.8px;height:4.8px;border-radius:50%;background:#cccccc"></div>
<div class="a" style="left:778px;top:140px;width:2102px;height:44px;background:#1f1f1f;"></div>
<div class="a t" style="left:810.5px;top:149.49px;font-size:26px;line-height:26px;color:#a9a9a9;font-weight:400;font-family:'Liberation Sans', sans-serif;letter-spacing:0.6px;-webkit-text-stroke:0.35px currentColor;">docs</div>
<div class="a t" style="left:901px;top:149.49px;font-size:26px;line-height:26px;color:#a9a9a9;font-weight:400;font-family:'Liberation Sans', sans-serif;letter-spacing:0.6px;-webkit-text-stroke:0.35px currentColor;">techstack</div>
<div class="a t" style="left:1051.7px;top:149.49px;font-size:26px;line-height:26px;color:#a9a9a9;font-weight:400;font-family:'Liberation Sans', sans-serif;letter-spacing:0.6px;-webkit-text-stroke:0.35px currentColor;">testimonials</div>
<svg class="a" style="left:1238px;top:151px;" width="20" height="22" viewBox="0 0 20 22"><path d="M4 0 L10.5 4 L17 0 V12.7 H21 L10.5 23 L0 12.7 H4 Z" fill="#649cba" transform="scale(0.952,0.957)"/></svg>
<div class="a t" style="left:1273px;top:149.49px;font-size:26px;line-height:26px;color:#a9a9a9;font-weight:400;font-family:'Liberation Sans', sans-serif;letter-spacing:0.6px;-webkit-text-stroke:0.35px currentColor;">index.md</div>
<div class="a t" style="left:1453.5px;top:149.49px;font-size:26px;line-height:26px;color:#a9a9a9;font-weight:400;font-family:'Liberation Sans', sans-serif;letter-spacing:0.6px;-webkit-text-stroke:0.35px currentColor;"># Testimonials</div>
<svg class="a" style="left:879.0px;top:150.0px;" width="14" height="24" viewBox="0 0 14 24"><path d="M2 2 L12 12.0 L2 22" stroke="#a9a9a9" stroke-width="1.8" fill="none"/></svg>
<svg class="a" style="left:1030.5px;top:150.0px;" width="14" height="24" viewBox="0 0 14 24"><path d="M2 2 L12 12.0 L2 22" stroke="#a9a9a9" stroke-width="1.8" fill="none"/></svg>
<svg class="a" style="left:1207.5px;top:150.0px;" width="14" height="24" viewBox="0 0 14 24"><path d="M2 2 L12 12.0 L2 22" stroke="#a9a9a9" stroke-width="1.8" fill="none"/></svg>
<svg class="a" style="left:1393.5px;top:150.0px;" width="14" height="24" viewBox="0 0 14 24"><path d="M2 2 L12 12.0 L2 22" stroke="#a9a9a9" stroke-width="1.8" fill="none"/></svg>
<svg class="a" style="left:1417px;top:148px;" width="30" height="28" viewBox="0 0 30 28"><rect x="2" y="2.5" width="26" height="20.5" rx="2" stroke="#cccccc" stroke-width="2" fill="none"/><text x="15" y="16.5" font-size="10.5" font-family="Liberation Sans" font-weight="700" letter-spacing="0.8" fill="#cccccc" text-anchor="middle">abc</text></svg>
<div class="a" style="left:778px;top:184px;width:2102px;height:1062px;background:#1f1f1f;"></div>
<div class="a" style="left:910px;top:580px;width:1702px;height:28px;border:4px solid #282828;border-right:0"></div>
<div class="a" style="left:1690.6999999999998px;top:580px;width:101.14999999999999px;height:36px;background:#3a3a3a;"></div>
<div class="a" style="left:1574.6px;top:581px;width:13.4px;height:32px;border:2px solid #4a5a4a;background:rgba(0,100,0,0.08)"></div>
<div class="a" style="left:2109.2px;top:581px;width:13.4px;height:32px;border:2px solid #4a5a4a;background:rgba(0,100,0,0.08)"></div>
<div class="a t" style="right:2023px;top:191.05px;font-size:25px;line-height:25px;color:#6e7681;font-weight:400;font-family:'Liberation Mono', monospace;letter-spacing:-0.552px;">1</div>
<div class="a t" style="left:910.4px;top:191.05px;font-size:25px;line-height:25px;color:#cccccc;font-weight:400;font-family:'Liberation Mono', monospace;letter-spacing:-0.552px;"><span>−−−</span></div>
<div class="a t" style="right:2023px;top:227.05px;font-size:25px;line-height:25px;color:#6e7681;font-weight:400;font-family:'Liberation Mono', monospace;letter-spacing:-0.552px;">2</div>
<div class="a t" style="left:910.4px;top:227.05px;font-size:25px;line-height:25px;color:#cccccc;font-weight:400;font-family:'Liberation Mono', monospace;letter-spacing:-0.552px;"><span style="color:#689cd2">pdf</span>: <span style="color:#689cd2">false</span></div>
<div class="a t" style="right:2023px;top:263.05px;font-size:25px;line-height:25px;color:#6e7681;font-weight:400;font-family:'Liberation Mono', monospace;letter-spacing:-0.552px;">3</div>
<div class="a t" style="left:910.4px;top:263.05px;font-size:25px;line-height:25px;color:#cccccc;font-weight:400;font-family:'Liberation Mono', monospace;letter-spacing:-0.552px;"><span style="color:#689cd2">comments</span>: <span style="color:#689cd2">false</span></div>
<div class="a t" style="right:2023px;top:299.05px;font-size:25px;line-height:25px;color:#6e7681;font-weight:400;font-family:'Liberation Mono', monospace;letter-spacing:-0.552px;">4</div>
<div class="a t" style="left:910.4px;top:299.05px;font-size:25px;line-height:25px;color:#cccccc;font-weight:400;font-family:'Liberation Mono', monospace;letter-spacing:-0.552px;">−−−</div>
<div class="a t" style="right:2023px;top:335.05px;font-size:25px;line-height:25px;color:#6e7681;font-weight:400;font-family:'Liberation Mono', monospace;letter-spacing:-0.552px;">5</div>
<div class="a t" style="left:910.4px;top:335.05px;font-size:25px;line-height:25px;color:#cccccc;font-weight:400;font-family:'Liberation Mono', monospace;letter-spacing:-0.552px;"><span style="color:#689cd2;font-weight:700">#&nbsp;Testimonials</span></div>
<div class="a t" style="right:2023px;top:371.05px;font-size:25px;line-height:25px;color:#6e7681;font-weight:400;font-family:'Liberation Mono', monospace;letter-spacing:-0.552px;">6</div>
<div class="a t" style="right:2023px;top:407.05px;font-size:25px;line-height:25px;color:#6e7681;font-weight:400;font-family:'Liberation Mono', monospace;letter-spacing:-0.552px;">7</div>
<div class="a t" style="left:910.4px;top:407.05px;font-size:25px;line-height:25px;color:#cccccc;font-weight:400;font-family:'Liberation Mono', monospace;letter-spacing:-0.552px;">Ich möchte gerne ein paar Screenshots meiner Installationen bereitstellen um einen Einblick in die einzelnen</div>
<div class="a t" style="left:910.4px;top:443.05px;font-size:25px;line-height:25px;color:#cccccc;font-weight:400;font-family:'Liberation Mono', monospace;letter-spacing:-0.552px;">Services zu erlauben.</div>
<div class="a t" style="right:2023px;top:479.05px;font-size:25px;line-height:25px;color:#6e7681;font-weight:400;font-family:'Liberation Mono', monospace;letter-spacing:-0.552px;">8</div>
<div class="a t" style="right:2023px;top:515.05px;font-size:25px;line-height:25px;color:#6e7681;font-weight:400;font-family:'Liberation Mono', monospace;letter-spacing:-0.552px;">9</div>
<div class="a t" style="left:910.4px;top:515.05px;font-size:25px;line-height:25px;color:#cccccc;font-weight:400;font-family:'Liberation Mono', monospace;letter-spacing:-0.552px;">![<span style="color:#cc9479">Mein Pi−hole−Dashboard</span>](<span style="text-decoration:underline;text-underline-offset:5px;text-decoration-thickness:1.5px">images/pihole−dashboard.png</span>){data−gallery="testimonials"}</div>
<div class="a t" style="right:2023px;top:551.05px;font-size:25px;line-height:25px;color:#6e7681;font-weight:400;font-family:'Liberation Mono', monospace;letter-spacing:-0.552px;">10</div>
<div class="a t" style="right:2023px;top:587.05px;font-size:25px;line-height:25px;color:#cccccc;font-weight:400;font-family:'Liberation Mono', monospace;letter-spacing:-0.552px;">11</div>
<div class="a t" style="left:910.4px;top:587.05px;font-size:25px;line-height:25px;color:#cccccc;font-weight:400;font-family:'Liberation Mono', monospace;letter-spacing:-0.552px;">![<span style="color:#cc9479">Grafana−Dashboard für meine Mailcow−Instanz</span>](<span style="text-decoration:underline;text-underline-offset:5px;text-decoration-thickness:1.5px">images/grafana−mailcow−dashboard.png</span>){data−gallery="testimonials"}</div>
<svg class="a" style="left:968.1999999999999px;top:430px;" width="1040.4" height="6" viewBox="0 0 1040.4 6"><polyline points="0.0 4 4.0 0 8.0 4 12.0 0 16.0 4 20.0 0 24.0 4 28.0 0 32.0 4 36.0 0 40.0 4 44.0 0 48.0 4 52.0 0 56.0 4 60.0 0 64.0 4 68.0 0 72.0 4 76.0 0 80.0 4 84.0 0 88.0 4 92.0 0 96.0 4 100.0 0 104.0 4 108.0 0 112.0 4 116.0 0 120.0 4 124.0 0 128.0 4 132.0 0 136.0 4 140.0 0 144.0 4 148.0 0 152.0 4 156.0 0 160.0 4 164.0 0 168.0 4 172.0 0 176.0 4 180.0 0 184.0 4 188.0 0 192.0 4 196.0 0 200.0 4 204.0 0 208.0 4 212.0 0 216.0 4 220.0 0 224.0 4 228.0 0 232.0 4 236.0 0 240.0 4 244.0 0 248.0 4 252.0 0 256.0 4 260.0 0 264.0 4 268.0 0 272.0 4 276.0 0 280.0 4 284.0 0 288.0 4 292.0 0 296.0 4 300.0 0 304.0 4 308.0 0 312.0 4 316.0 0 320.0 4 324.0 0 328.0 4 332.0 0 336.0 4 340.0 0 344.0 4 348.0 0 352.0 4 356.0 0 360.0 4 364.0 0 368.0 4 372.0 0 376.0 4 380.0 0 384.0 4 388.0 0 392.0 4 396.0 0 400.0 4 404.0 0 408.0 4 412.0 0 416.0 4 420.0 0 424.0 4 428.0 0 432.0 4 436.0 0 440.0 4 444.0 0 448.0 4 452.0 0 456.0 4 460.0 0 464.0 4 468.0 0 472.0 4 476.0 0 480.0 4 484.0 0 488.0 4 492.0 0 496.0 4 500.0 0 504.0 4 508.0 0 512.0 4 516.0 0 520.0 4 524.0 0 528.0 4 532.0 0 536.0 4 540.0 0 544.0 4 548.0 0 552.0 4 556.0 0 560.0 4 564.0 0 568.0 4 572.0 0 576.0 4 580.0 0 584.0 4 588.0 0 592.0 4 596.0 0 600.0 4 604.0 0 608.0 4 612.0 0 616.0 4 620.0 0 624.0 4 628.0 0 632.0 4 636.0 0 640.0 4 644.0 0 648.0 4 652.0 0 656.0 4 660.0 0 664.0 4 668.0 0 672.0 4 676.0 0 680.0 4 684.0 0 688.0 4 692.0 0 696.0 4 700.0 0 704.0 4 708.0 0 712.0 4 716.0 0 720.0 4 724.0 0 728.0 4 732.0 0 736.0 4 740.0 0 744.0 4 748.0 0 752.0 4 756.0 0 760.0 4 764.0 0 768.0 4 772.0 0 776.0 4 780.0 0 784.0 4 788.0 0 792.0 4 796.0 0 800.0 4 804.0 0 808.0 4 812.0 0 816.0 4 820.0 0 824.0 4 828.0 0 832.0 4 836.0 0 840.0 4 844.0 0 848.0 4 852.0 0 856.0 4 860.0 0 864.0 4 868.0 0 872.0 4 876.0 0 880.0 4 884.0 0 888.0 4 892.0 0 896.0 4 900.0 0 904.0 4 908.0 0 912.0 4 916.0 0 920.0 4 924.0 0 928.0 4 932.0 0 936.0 4 940.0 0 944.0 4 948.0 0 952.0 4 956.0 0 960.0 4 964.0 0 968.0 4 972.0 0 976.0 4 980.0 0 984.0 4 988.0 0 992.0 4 996.0 0 1000.0 4 1004.0 0 1008.0 4 1012.0 0 1016.0 4 1020.0 0 1024.0 4 1028.0 0 1032.0 4 1036.0 0 1040.0 4" stroke="#3e8ed0" stroke-width="1.8" fill="none"/></svg>
<svg class="a" style="left:916px;top:544px;" width="26" height="30" viewBox="0 0 26 30"><path d="M11 2 C5 2 2 6 2 10.5 C2 14 4 16 6 18 V23 H16 V18 C18 16 20 14 20 10.5 C20 6 17 2 11 2 Z" fill="#f1c232"/><rect x="7" y="20" width="8" height="7" rx="1" fill="#1f1f1f" stroke="#f1c232" stroke-width="2"/></svg>
<svg class="a" style="left:2527px;top:609px;" width="16" height="8" viewBox="0 0 16 8"><path d="M1 4.5 Q4 7.5 7.5 4.5 Q11 1 14.5 5" stroke="#d4aa2a" stroke-width="2" fill="none"/></svg>
<div class="a" style="left:2772.0px;top:208px;width:80.0px;height:4px;background:#3a6ba8;"></div>
<div class="a t" style="left:2620px;top:183.5px;font-size:3.334px;line-height:4px;font-family:'Liberation Mono', monospace;color:#bbbbbb;font-weight:700">−−−</div>
<div class="a t" style="left:2620px;top:187.5px;font-size:3.334px;line-height:4px;font-family:'Liberation Mono', monospace;color:#bbbbbb;font-weight:700"><span style="color:#689cd2">pdf</span>: <span style="color:#689cd2">false</span></div>
<div class="a t" style="left:2620px;top:191.5px;font-size:3.334px;line-height:4px;font-family:'Liberation Mono', monospace;color:#bbbbbb;font-weight:700"><span style="color:#689cd2">comments</span>: <span style="color:#689cd2">false</span></div>
<div class="a t" style="left:2620px;top:195.5px;font-size:3.334px;line-height:4px;font-family:'Liberation Mono', monospace;color:#bbbbbb;font-weight:700">−−−</div>
<div class="a t" style="left:2620px;top:199.5px;font-size:3.334px;line-height:4px;font-family:'Liberation Mono', monospace;color:#bbbbbb;font-weight:700"><span style="color:#689cd2"># Testimonials</span></div>
<div class="a t" style="left:2620px;top:207.5px;font-size:3.334px;line-height:4px;font-family:'Liberation Mono', monospace;color:#bbbbbb;font-weight:700">Ich möchte gerne ein paar Screenshots meiner Installationen bereitstellen um einen Einblick in die einzelnen</div>
<div class="a t" style="left:2620px;top:211.5px;font-size:3.334px;line-height:4px;font-family:'Liberation Mono', monospace;color:#bbbbbb;font-weight:700">Services zu erlauben.</div>
<div class="a t" style="left:2620px;top:219.5px;font-size:3.334px;line-height:4px;font-family:'Liberation Mono', monospace;color:#bbbbbb;font-weight:700">![<span style="color:#cc9479">Mein Pi−hole−Dashboard</span>](images/pihole−dashboard.png){data−gallery="testimonials"}</div>
<div class="a t" style="left:2620px;top:227.5px;font-size:3.334px;line-height:4px;font-family:'Liberation Mono', monospace;color:#bbbbbb;font-weight:700">![<span style="color:#cc9479">Grafana−Dashboard für meine Mailcow−Instanz</span>](images/grafana−mailcow−dashboard.png){data−gallery="testimonials"}</div>
<div class="a" style="left:2628.0px;top:208px;width:144.0px;height:4px;background:#4d94ea;"></div>
<div class="a" style="left:2728.0px;top:228px;width:14.0px;height:4px;background:#6a6a6a;"></div>
<div class="a" style="left:2844.0px;top:228px;width:3px;height:4px;background:#f1c232;"></div>
<div class="a" style="left:2852px;top:184px;width:28px;height:772px;background:#434343;"></div>
<div class="a" style="left:2851px;top:956px;width:1px;height:290px;background:#121212;"></div>
<div class="a" style="left:2871px;top:341px;width:9px;height:26px;background:#4a8ee0;"></div>
<div class="a" style="left:2852px;top:470px;width:28px;height:3px;background:#8a8a8a;"></div>
<div class="a" style="left:2862px;top:474px;width:9px;height:24px;background:#8a8a8a;"></div>
<div class="a" style="left:2871px;top:474px;width:9px;height:24px;background:#b59a45;"></div>
<div class="a" style="left:778px;top:1246px;width:2102px;height:460px;background:#181818;"></div>
<div class="a" style="left:778px;top:1246px;width:2102px;height:2px;background:#2b2b2b;"></div>
<div class="a t" style="left:818.6px;top:1271.53px;font-size:23px;line-height:23px;color:#9d9d9d;font-weight:400;font-family:'Liberation Sans', sans-serif;letter-spacing:0px;transform:scaleX(0.921);transform-origin:0 0;-webkit-text-stroke:0.35px currentColor;">PROBLEMS</div>
<div class="a" style="left:946px;top:1266px;width:52px;height:32px;border-radius:16px;background:#3178d2;color:#fff;font:400 22px/32px 'Liberation Sans',sans-serif;text-align:center">161</div>
<div class="a t" style="left:1042px;top:1271.53px;font-size:23px;line-height:23px;color:#9d9d9d;font-weight:400;font-family:'Liberation Sans', sans-serif;letter-spacing:0px;transform:scaleX(0.962);transform-origin:0 0;-webkit-text-stroke:0.35px currentColor;">OUTPUT</div>
<div class="a t" style="left:1182px;top:1271.53px;font-size:23px;line-height:23px;color:#9d9d9d;font-weight:400;font-family:'Liberation Sans', sans-serif;letter-spacing:0px;transform:scaleX(0.94);transform-origin:0 0;-webkit-text-stroke:0.35px currentColor;">DEBUG CONSOLE</div>
<div class="a t" style="left:1420.5px;top:1271.53px;font-size:23px;line-height:23px;color:#e7e7e7;font-weight:400;font-family:'Liberation Sans', sans-serif;letter-spacing:0px;transform:scaleX(0.937);transform-origin:0 0;-webkit-text-stroke:0.35px currentColor;">TERMINAL</div>
<div class="a" style="left:1415px;top:1302px;width:120px;height:3px;background:#3178d2;"></div>
<div class="a t" style="left:1578.7px;top:1271.53px;font-size:23px;line-height:23px;color:#9d9d9d;font-weight:400;font-family:'Liberation Sans', sans-serif;letter-spacing:0px;transform:scaleX(0.926);transform-origin:0 0;-webkit-text-stroke:0.35px currentColor;">PORTS</div>
<svg class="a" style="left:2642px;top:1267px;" width="30" height="30" viewBox="0 0 30 30"><path d="M15 2 V28 M2 15 H28" stroke="#cccccc" stroke-width="2"/></svg>
<svg class="a" style="left:2679px;top:1278px;" width="18" height="12" viewBox="0 0 18 12"><path d="M1.5 1.5 L9 9 L16.5 1.5" stroke="#cccccc" stroke-width="1.8" fill="none"/></svg>
<div class="a" style="left:2719.6px;top:1280.5px;width:4.8px;height:4.8px;border-radius:50%;background:#cccccc"></div>
<div class="a" style="left:2729.6px;top:1280.5px;width:4.8px;height:4.8px;border-radius:50%;background:#cccccc"></div>
<div class="a" style="left:2739.6px;top:1280.5px;width:4.8px;height:4.8px;border-radius:50%;background:#cccccc"></div>
<svg class="a" style="left:2770px;top:1274px;" width="24" height="14" viewBox="0 0 24 14"><path d="M2 12 L12 2 L22 12" stroke="#cccccc" stroke-width="2" fill="none"/></svg>
<svg class="a" style="left:2823px;top:1272px;" width="22" height="21" viewBox="0 0 22 21"><path d="M2 2 L19.5 19 M19.5 2 L2 19" stroke="#cccccc" stroke-width="2.2"/></svg>
<div class="a t" style="left:818.7px;top:1345.63px;font-size:24.5px;line-height:24.5px;color:#cccccc;font-weight:400;font-family:'Liberation Mono', monospace;letter-spacing:-0.702px;"><span style="color:#e5e54a">WARNING −</span>  [git−authors−plugin] /var/folders/v7/z_wrc8q55fn7bsw7wsfqvdrm0000gn/T/tmpy8osgaj4/blog/category/serie.md has not been</div>
<div class="a t" style="left:818.7px;top:1373.63px;font-size:24.5px;line-height:24.5px;color:#cccccc;font-weight:400;font-family:'Liberation Mono', monospace;letter-spacing:-0.702px;">           committed yet. Lines are not counted</div>
<div class="a t" style="left:818.7px;top:1401.63px;font-size:24.5px;line-height:24.5px;color:#cccccc;font-weight:400;font-family:'Liberation Mono', monospace;letter-spacing:-0.702px;"><span style="color:#e5e54a">WARNING −</span>  [git−authors−plugin] /var/folders/v7/z_wrc8q55fn7bsw7wsfqvdrm0000gn/T/tmpy8osgaj4/blog/category/wissensmanagement.md</div>
<div class="a t" style="left:818.7px;top:1429.63px;font-size:24.5px;line-height:24.5px;color:#cccccc;font-weight:400;font-family:'Liberation Mono', monospace;letter-spacing:-0.702px;">           has not been committed yet. Lines are not counted</div>
<div class="a t" style="left:818.7px;top:1457.63px;font-size:24.5px;line-height:24.5px;color:#cccccc;font-weight:400;font-family:'Liberation Mono', monospace;letter-spacing:-0.702px;"><span style="color:#e5e54a">WARNING −</span>  [git−authors−plugin] /var/folders/v7/z_wrc8q55fn7bsw7wsfqvdrm0000gn/T/tmpy8osgaj4/blog/category/servicemanagement.md</div>
<div class="a t" style="left:818.7px;top:1485.63px;font-size:24.5px;line-height:24.5px;color:#cccccc;font-weight:400;font-family:'Liberation Mono', monospace;letter-spacing:-0.702px;">           has not been committed yet. Lines are not counted</div>
<div class="a t" style="left:818.7px;top:1513.63px;font-size:24.5px;line-height:24.5px;color:#cccccc;font-weight:400;font-family:'Liberation Mono', monospace;letter-spacing:-0.702px;"><span style="color:#e5e54a">WARNING −</span>  [git−authors−plugin] /var/folders/v7/z_wrc8q55fn7bsw7wsfqvdrm0000gn/T/tmpy8osgaj4/blog/category/tools.md has not been</div>
<div class="a t" style="left:818.7px;top:1541.63px;font-size:24.5px;line-height:24.5px;color:#cccccc;font-weight:400;font-family:'Liberation Mono', monospace;letter-spacing:-0.702px;">           committed yet. Lines are not counted</div>
<div class="a t" style="left:818.7px;top:1569.63px;font-size:24.5px;line-height:24.5px;color:#cccccc;font-weight:400;font-family:'Liberation Mono', monospace;letter-spacing:-0.702px;"><span style="color:#e5e54a">WARNING −</span>  [git−authors−plugin] /var/folders/v7/z_wrc8q55fn7bsw7wsfqvdrm0000gn/T/tmpy8osgaj4/blog/category/allgemeines.md has</div>
<div class="a t" style="left:818.7px;top:1597.63px;font-size:24.5px;line-height:24.5px;color:#cccccc;font-weight:400;font-family:'Liberation Mono', monospace;letter-spacing:-0.702px;">           not been committed yet. Lines are not counted</div>
<div class="a t" style="left:818.7px;top:1625.63px;font-size:24.5px;line-height:24.5px;color:#cccccc;font-weight:400;font-family:'Liberation Mono', monospace;letter-spacing:-0.702px;">INFO    −  Documentation built in 7.56 seconds</div>
<div class="a t" style="left:818.7px;top:1653.63px;font-size:24.5px;line-height:24.5px;color:#cccccc;font-weight:400;font-family:'Liberation Mono', monospace;letter-spacing:-0.702px;">INFO    −  [18:28:42] Reloading browsers</div>
<div class="a" style="left:818.5px;top:1679px;width:10px;height:25px;border:2px solid #cccccc"></div>
<div class="a" style="left:2612px;top:1342px;width:28px;height:364px;background:#141414;border-left:1px solid #0c0c0c;border-top:1px solid #0c0c0c;box-sizing:border-box"></div>
<div class="a" style="left:2640px;top:1316px;width:2px;height:390px;background:#2b2b2b;"></div>
<div class="a" style="left:2642px;top:1360px;width:238px;height:44px;background:#37373d;"></div>
<div class="a" style="left:2642px;top:1360px;width:2px;height:44px;background:#3178d2;"></div>
<svg class="a" style="left:2663px;top:1322px;" width="30" height="30" viewBox="0 0 30 30"><rect x="1.5" y="1.5" width="26.5" height="26.5" rx="2" stroke="#cccccc" stroke-width="2" fill="none"/><path d="M6.5 9 L12.5 14.5 L6.5 20" stroke="#cccccc" stroke-width="2" fill="none"/><path d="M14 21 H23" stroke="#cccccc" stroke-width="2"/></svg>
<div class="a t" style="left:2701.6px;top:1325.99px;font-size:26px;line-height:26px;color:#cccccc;font-weight:400;font-family:'Liberation Sans', sans-serif;letter-spacing:0.4px;-webkit-text-stroke:0.35px currentColor;">zsh</div>
<svg class="a" style="left:2663px;top:1366px;" width="30" height="30" viewBox="0 0 30 30"><rect x="1.5" y="1.5" width="26.5" height="26.5" rx="2" stroke="#cccccc" stroke-width="2" fill="none"/><path d="M6.5 9 L12.5 14.5 L6.5 20" stroke="#cccccc" stroke-width="2" fill="none"/><path d="M14 21 H23" stroke="#cccccc" stroke-width="2"/></svg>
<div class="a t" style="left:2701.6px;top:1369.99px;font-size:26px;line-height:26px;color:#cccccc;font-weight:400;font-family:'Liberation Sans', sans-serif;letter-spacing:0.4px;-webkit-text-stroke:0.35px currentColor;">Python</div>
<div class="a" style="left:0px;top:1706px;width:2880px;height:44px;background:#181818;"></div>
<div class="a" style="left:0px;top:1706px;width:2880px;height:2px;background:#2b2b2b;"></div>
<div class="a" style="left:0px;top:1708px;width:68px;height:42px;background:#3178d2;"></div>
<svg class="a" style="left:20px;top:1712px;" width="26" height="32" viewBox="0 0 26 32"><path d="M5.5 11 L13 19 L5.5 27 M21.6 4 L14.4 11.5 L21.6 19" stroke="#fff" stroke-width="2" fill="none"/></svg>
<svg class="a" style="left:82px;top:1714px;" width="24" height="30" viewBox="0 0 24 30"><circle cx="5" cy="5" r="3.2" stroke="#ccc" stroke-width="2" fill="none"/><circle cx="5" cy="25" r="3.2" stroke="#ccc" stroke-width="2" fill="none"/><circle cx="19" cy="9" r="3.2" stroke="#ccc" stroke-width="2" fill="none"/><path d="M5 8.2 V21.8 M19 12.2 Q19 18 11 18.5 Q5 19 5 22" stroke="#ccc" stroke-width="2" fill="none"/></svg>
<div class="a t" style="left:116px;top:1716.68px;font-size:24px;line-height:24px;color:#cccccc;font-weight:400;font-family:'Liberation Sans', sans-serif;letter-spacing:0.7px;-webkit-text-stroke:0.35px currentColor;">develop*</div>
<svg class="a" style="left:227px;top:1716px;" width="30" height="26" viewBox="0 0 30 26"><path d="M4.5 9.5 A10 10 0 0 1 24 10.5" stroke="#ccc" stroke-width="2" fill="none"/><path d="M24.5 14 A10 10 0 0 1 5 14.5" stroke="#ccc" stroke-width="2" fill="none"/><path d="M20.5 10 L24.5 14 L28.5 10 M1 14.5 L5 10.5 L9 14.5" stroke="#ccc" stroke-width="2" fill="none"/></svg>
<svg class="a" style="left:285px;top:1715.5px;" width="25" height="25" viewBox="0 0 25 25"><circle cx="12.5" cy="12.5" r="10.7" stroke="#ccc" stroke-width="2" fill="none"/><path d="M8.2 8.2 L16.8 16.8 M16.8 8.2 L8.2 16.8" stroke="#ccc" stroke-width="2"/></svg>
<div class="a t" style="left:320px;top:1716.68px;font-size:24px;line-height:24px;color:#cccccc;font-weight:400;font-family:'Liberation Sans', sans-serif;letter-spacing:0px;-webkit-text-stroke:0.35px currentColor;">5</div>
<svg class="a" style="left:341px;top:1714px;" width="27" height="26" viewBox="0 0 27 26"><path d="M13.5 2.5 L25 23.5 H2 Z" stroke="#ccc" stroke-width="2" fill="none" stroke-linejoin="round"/><path d="M13.5 9.5 V16.5" stroke="#ccc" stroke-width="2.2"/><circle cx="13.5" cy="20" r="1.3" fill="#ccc"/></svg>
<div class="a t" style="left:376.6px;top:1716.68px;font-size:24px;line-height:24px;color:#cccccc;font-weight:400;font-family:'Liberation Sans', sans-serif;letter-spacing:0.6px;-webkit-text-stroke:0.35px currentColor;">71</div>
<svg class="a" style="left:413.5px;top:1715.5px;" width="25" height="25" viewBox="0 0 25 25"><circle cx="12.5" cy="12.5" r="10.7" stroke="#ccc" stroke-width="2" fill="none"/><path d="M12.5 10.5 V18" stroke="#ccc" stroke-width="2.4"/><circle cx="12.5" cy="7" r="1.5" fill="#ccc"/></svg>
<div class="a t" style="left:447px;top:1716.68px;font-size:24px;line-height:24px;color:#cccccc;font-weight:400;font-family:'Liberation Sans', sans-serif;letter-spacing:0.6px;-webkit-text-stroke:0.35px currentColor;">85</div>
<svg class="a" style="left:509px;top:1716px;" width="28" height="24" viewBox="0 0 28 24"><path d="M2 3.5 Q2 2 3.5 2 H10 L13 5 H24.5 Q26 5 26 6.5 V20.5 Q26 22 24.5 22 H3.5 Q2 22 2 20.5 Z M2 9 H26" stroke="#ccc" stroke-width="2" fill="none"/></svg>
<svg class="a" style="left:569px;top:1716px;" width="28" height="24" viewBox="0 0 28 24"><path d="M2 3.5 Q2 2 3.5 2 H10 L13 5 H24.5 Q26 5 26 6.5 V20.5 Q26 22 24.5 22 H3.5 Q2 22 2 20.5 Z M2 9 H26" stroke="#ccc" stroke-width="2" fill="none"/></svg>
<div class="a t" style="left:604px;top:1716.68px;font-size:24px;line-height:24px;color:#cccccc;font-weight:400;font-family:'Liberation Sans', sans-serif;letter-spacing:0.6px;-webkit-text-stroke:0.35px currentColor;">stephan.hadan.de</div>
<svg class="a" style="left:1778px;top:1716px;" width="28" height="22" viewBox="0 0 28 22"><rect x="1.5" y="1.5" width="24" height="19" rx="1" stroke="#ccc" stroke-width="2" fill="none"/><path d="M6 7 H21 M6 11 H16 M6 15 H13" stroke="#ccc" stroke-width="2"/></svg>
<div class="a t" style="left:1814.5px;top:1716.68px;font-size:24px;line-height:24px;color:#cccccc;font-weight:400;font-family:'Liberation Sans', sans-serif;letter-spacing:0.6px;-webkit-text-stroke:0.35px currentColor;">1 slide</div>
<div class="a t" style="left:1920px;top:1716.68px;font-size:24px;line-height:24px;color:#cccccc;font-weight:400;font-family:'Liberation Sans', sans-serif;letter-spacing:0.84px;-webkit-text-stroke:0.35px currentColor;">Ln 11, Col 55</div>
<div class="a t" style="left:2105px;top:1716.68px;font-size:24px;line-height:24px;color:#cccccc;font-weight:400;font-family:'Liberation Sans', sans-serif;letter-spacing:0.35px;-webkit-text-stroke:0.35px currentColor;">Spaces: 4</div>
<div class="a t" style="left:2248.6px;top:1716.68px;font-size:24px;line-height:24px;color:#cccccc;font-weight:400;font-family:'Liberation Sans', sans-serif;letter-spacing:0.6px;-webkit-text-stroke:0.35px currentColor;">UTF-8</div>
<div class="a t" style="left:2353px;top:1716.68px;font-size:24px;line-height:24px;color:#cccccc;font-weight:400;font-family:'Liberation Sans', sans-serif;letter-spacing:0.6px;-webkit-text-stroke:0.35px currentColor;">LF</div>
<svg class="a" style="left:2408px;top:1714px;" width="20" height="30" viewBox="0 0 20 30"><path d="M16 3 Q4 8 4 15 Q4 22 14 27" stroke="#ccc" stroke-width="2" fill="none"/></svg>
<div class="a t" style="left:2448.6px;top:1716.68px;font-size:24px;line-height:24px;color:#cccccc;font-weight:400;font-family:'Liberation Sans', sans-serif;letter-spacing:0.76px;-webkit-text-stroke:0.35px currentColor;">Markdown</div>
<svg class="a" style="left:2592px;top:1722px;" width="30" height="22" viewBox="0 0 30 22"><path d="M3 4 Q4 19 15 19 Q23 19 27 12" stroke="#ccc" stroke-width="2" fill="none"/></svg>
<svg class="a" style="left:2654px;top:1718px;" width="26" height="22" viewBox="0 0 26 22"><path d="M2 11 L9 19 L24 2" stroke="#ccc" stroke-width="2" fill="none"/></svg>
<div class="a t" style="left:2687px;top:1716.68px;font-size:24px;line-height:24px;color:#cccccc;font-weight:400;font-family:'Liberation Sans', sans-serif;letter-spacing:0.7px;-webkit-text-stroke:0.35px currentColor;">Continue</div>
<svg class="a" style="left:2822px;top:1714px;" width="28" height="30" viewBox="0 0 28 30"><path d="M4 21 Q6 18 6 12 Q6 3 14 3 Q22 3 22 12 Q22 18 24 21 Z" stroke="#ccc" stroke-width="2" fill="none" stroke-linejoin="round"/><path d="M11 23 Q11 26.5 14 26.5 Q17 26.5 17 23" stroke="#ccc" stroke-width="2" fill="none"/></svg>
</div></body></html>
